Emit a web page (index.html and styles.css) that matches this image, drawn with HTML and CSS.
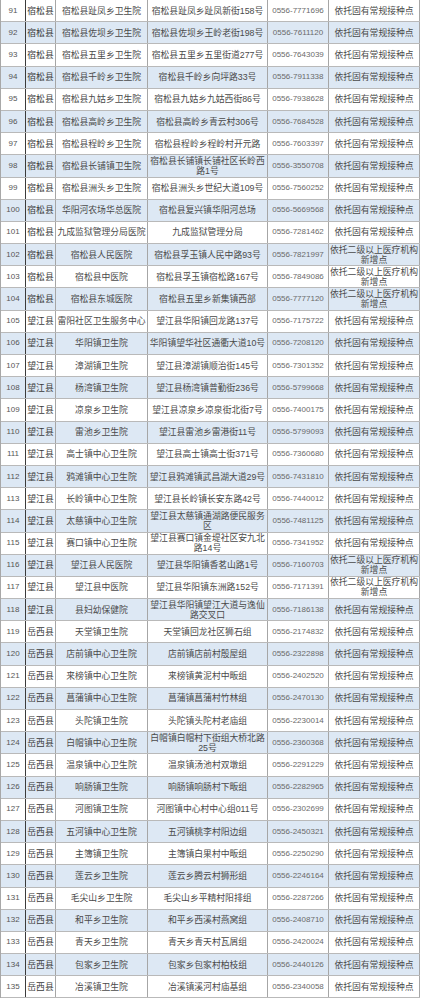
FILE: index.html
```html
<!DOCTYPE html>
<html lang="zh-CN">
<head>
<meta charset="utf-8">
<title>接种点</title>
<link rel="stylesheet" href="styles.css">
</head>
<body>
<div class="tbl">
<div class="row"><div class="c n">91</div><div class="c x">宿松县</div><div class="c">宿松县趾凤乡卫生院</div><div class="c">宿松县趾凤乡趾凤新街158号</div><div class="c p">0556-7771696</div><div class="c">依托固有常规接种点</div></div>
<div class="row"><div class="c n">92</div><div class="c x">宿松县</div><div class="c">宿松县佐坝乡卫生院</div><div class="c">宿松县佐坝乡王岭老街198号</div><div class="c p">0556-7611120</div><div class="c">依托固有常规接种点</div></div>
<div class="row"><div class="c n">93</div><div class="c x">宿松县</div><div class="c">宿松县五里乡卫生院</div><div class="c">宿松县五里乡五里街道277号</div><div class="c p">0556-7643039</div><div class="c">依托固有常规接种点</div></div>
<div class="row"><div class="c n">94</div><div class="c x">宿松县</div><div class="c">宿松县千岭乡卫生院</div><div class="c">宿松县千岭乡向坪路33号</div><div class="c p">0556-7911338</div><div class="c">依托固有常规接种点</div></div>
<div class="row"><div class="c n">95</div><div class="c x">宿松县</div><div class="c">宿松县九姑乡卫生院</div><div class="c">宿松县九姑乡九姑西街86号</div><div class="c p">0556-7938628</div><div class="c">依托固有常规接种点</div></div>
<div class="row"><div class="c n">96</div><div class="c x">宿松县</div><div class="c">宿松县高岭乡卫生院</div><div class="c">宿松县高岭乡青云村306号</div><div class="c p">0556-7684528</div><div class="c">依托固有常规接种点</div></div>
<div class="row"><div class="c n">97</div><div class="c x">宿松县</div><div class="c">宿松县程岭乡卫生院</div><div class="c">宿松县程岭乡程岭村开元路</div><div class="c p">0556-7603397</div><div class="c">依托固有常规接种点</div></div>
<div class="row"><div class="c n">98</div><div class="c x">宿松县</div><div class="c">宿松县长铺镇卫生院</div><div class="c">宿松县长铺镇长铺社区长岭西<br>路1号</div><div class="c p">0556-3550708</div><div class="c">依托固有常规接种点</div></div>
<div class="row"><div class="c n">99</div><div class="c x">宿松县</div><div class="c">宿松县洲头乡卫生院</div><div class="c">宿松县洲头乡世纪大道109号</div><div class="c p">0556-7560252</div><div class="c">依托固有常规接种点</div></div>
<div class="row"><div class="c n">100</div><div class="c x">宿松县</div><div class="c">华阳河农场华总医院</div><div class="c">宿松县复兴镇华阳河总场</div><div class="c p">0556-5669568</div><div class="c">依托固有常规接种点</div></div>
<div class="row"><div class="c n">101</div><div class="c x">宿松县</div><div class="c">九成监狱管理分局医院</div><div class="c">九成监狱管理分局</div><div class="c p">0556-7281462</div><div class="c">依托固有常规接种点</div></div>
<div class="row"><div class="c n">102</div><div class="c x">宿松县</div><div class="c">宿松县人民医院</div><div class="c">宿松县孚玉镇人民中路93号</div><div class="c p">0556-7821997</div><div class="c">依托二级以上医疗机构<br>新增点</div></div>
<div class="row"><div class="c n">103</div><div class="c x">宿松县</div><div class="c">宿松县中医院</div><div class="c">宿松县孚玉镇宿松路167号</div><div class="c p">0556-7849086</div><div class="c">依托二级以上医疗机构<br>新增点</div></div>
<div class="row"><div class="c n">104</div><div class="c x">宿松县</div><div class="c">宿松县东城医院</div><div class="c">宿松县五里乡新集镇西部</div><div class="c p">0556-7777120</div><div class="c">依托二级以上医疗机构<br>新增点</div></div>
<div class="row"><div class="c n">105</div><div class="c x">望江县</div><div class="c">雷阳社区卫生服务中心</div><div class="c">望江县华阳镇回龙路137号</div><div class="c p">0556-7175722</div><div class="c">依托固有常规接种点</div></div>
<div class="row"><div class="c n">106</div><div class="c x">望江县</div><div class="c">华阳镇卫生院</div><div class="c">华阳镇望华社区通衢大道10号</div><div class="c p">0556-7208120</div><div class="c">依托固有常规接种点</div></div>
<div class="row"><div class="c n">107</div><div class="c x">望江县</div><div class="c">漳湖镇卫生院</div><div class="c">望江县漳湖镇顺治街145号</div><div class="c p">0556-7301352</div><div class="c">依托固有常规接种点</div></div>
<div class="row"><div class="c n">108</div><div class="c x">望江县</div><div class="c">杨湾镇卫生院</div><div class="c">望江县杨湾镇普勤街236号</div><div class="c p">0556-5799668</div><div class="c">依托固有常规接种点</div></div>
<div class="row"><div class="c n">109</div><div class="c x">望江县</div><div class="c">凉泉乡卫生院</div><div class="c">望江县凉泉乡凉泉街北街7号</div><div class="c p">0556-7400175</div><div class="c">依托固有常规接种点</div></div>
<div class="row"><div class="c n">110</div><div class="c x">望江县</div><div class="c">雷池乡卫生院</div><div class="c">望江县雷池乡雷港街11号</div><div class="c p">0556-5799093</div><div class="c">依托固有常规接种点</div></div>
<div class="row"><div class="c n">111</div><div class="c x">望江县</div><div class="c">高士镇中心卫生院</div><div class="c">望江县高士镇高士街371号</div><div class="c p">0556-7360680</div><div class="c">依托固有常规接种点</div></div>
<div class="row"><div class="c n">112</div><div class="c x">望江县</div><div class="c">鸦滩镇中心卫生院</div><div class="c">望江县鸦滩镇武昌湖大道29号</div><div class="c p">0556-7431810</div><div class="c">依托固有常规接种点</div></div>
<div class="row"><div class="c n">113</div><div class="c x">望江县</div><div class="c">长岭镇中心卫生院</div><div class="c">望江县长岭镇长安东路42号</div><div class="c p">0556-7440012</div><div class="c">依托固有常规接种点</div></div>
<div class="row"><div class="c n">114</div><div class="c x">望江县</div><div class="c">太慈镇中心卫生院</div><div class="c">望江县太慈镇通湖路便民服务<br>区</div><div class="c p">0556-7481125</div><div class="c">依托固有常规接种点</div></div>
<div class="row"><div class="c n">115</div><div class="c x">望江县</div><div class="c">赛口镇中心卫生院</div><div class="c">望江县赛口镇金堤社区安九北<br>路14号</div><div class="c p">0556-7341952</div><div class="c">依托固有常规接种点</div></div>
<div class="row"><div class="c n">116</div><div class="c x">望江县</div><div class="c">望江县人民医院</div><div class="c">望江县华阳镇香茗山路1号</div><div class="c p">0556-7160703</div><div class="c">依托二级以上医疗机构<br>新增点</div></div>
<div class="row"><div class="c n">117</div><div class="c x">望江县</div><div class="c">望江县中医院</div><div class="c">望江县华阳镇东洲路152号</div><div class="c p">0556-7171391</div><div class="c">依托二级以上医疗机构<br>新增点</div></div>
<div class="row"><div class="c n">118</div><div class="c x">望江县</div><div class="c">县妇幼保健院</div><div class="c">望江县华阳镇望江大道与逸仙<br>路交叉口</div><div class="c p">0556-7186138</div><div class="c">依托固有常规接种点</div></div>
<div class="row"><div class="c n">119</div><div class="c x">岳西县</div><div class="c">天堂镇卫生院</div><div class="c">天堂镇回龙社区狮石组</div><div class="c p">0556-2174832</div><div class="c">依托固有常规接种点</div></div>
<div class="row"><div class="c n">120</div><div class="c x">岳西县</div><div class="c">店前镇中心卫生院</div><div class="c">店前镇店前村殷屋组</div><div class="c p">0556-2322898</div><div class="c">依托固有常规接种点</div></div>
<div class="row"><div class="c n">121</div><div class="c x">岳西县</div><div class="c">来榜镇中心卫生院</div><div class="c">来榜镇黄泥村中畈组</div><div class="c p">0556-2402520</div><div class="c">依托固有常规接种点</div></div>
<div class="row"><div class="c n">122</div><div class="c x">岳西县</div><div class="c">菖蒲镇中心卫生院</div><div class="c">菖蒲镇菖蒲村竹林组</div><div class="c p">0556-2470130</div><div class="c">依托固有常规接种点</div></div>
<div class="row"><div class="c n">123</div><div class="c x">岳西县</div><div class="c">头陀镇卫生院</div><div class="c">头陀镇头陀村老庙组</div><div class="c p">0556-2230014</div><div class="c">依托固有常规接种点</div></div>
<div class="row"><div class="c n">124</div><div class="c x">岳西县</div><div class="c">白帽镇中心卫生院</div><div class="c">白帽镇白帽村下街组大桥北路<br>25号</div><div class="c p">0556-2360368</div><div class="c">依托固有常规接种点</div></div>
<div class="row"><div class="c n">125</div><div class="c x">岳西县</div><div class="c">温泉镇中心卫生院</div><div class="c">温泉镇汤池村双墩组</div><div class="c p">0556-2291229</div><div class="c">依托固有常规接种点</div></div>
<div class="row"><div class="c n">126</div><div class="c x">岳西县</div><div class="c">响肠镇卫生院</div><div class="c">响肠镇响肠村下畈组</div><div class="c p">0556-2282965</div><div class="c">依托固有常规接种点</div></div>
<div class="row"><div class="c n">127</div><div class="c x">岳西县</div><div class="c">河图镇卫生院</div><div class="c">河图镇中心村中心组011号</div><div class="c p">0556-2302699</div><div class="c">依托固有常规接种点</div></div>
<div class="row"><div class="c n">128</div><div class="c x">岳西县</div><div class="c">五河镇中心卫生院</div><div class="c">五河镇桃李村阳边组</div><div class="c p">0556-2450321</div><div class="c">依托固有常规接种点</div></div>
<div class="row"><div class="c n">129</div><div class="c x">岳西县</div><div class="c">主簿镇卫生院</div><div class="c">主簿镇白果村中畈组</div><div class="c p">0556-2250290</div><div class="c">依托固有常规接种点</div></div>
<div class="row"><div class="c n">130</div><div class="c x">岳西县</div><div class="c">莲云乡卫生院</div><div class="c">莲云乡腾云村狮形组</div><div class="c p">0556-2246164</div><div class="c">依托固有常规接种点</div></div>
<div class="row"><div class="c n">131</div><div class="c x">岳西县</div><div class="c">毛尖山乡卫生院</div><div class="c">毛尖山乡平精村阳排组</div><div class="c p">0556-2287266</div><div class="c">依托固有常规接种点</div></div>
<div class="row"><div class="c n">132</div><div class="c x">岳西县</div><div class="c">和平乡卫生院</div><div class="c">和平乡西溪村燕窝组</div><div class="c p">0556-2408710</div><div class="c">依托固有常规接种点</div></div>
<div class="row"><div class="c n">133</div><div class="c x">岳西县</div><div class="c">青天乡卫生院</div><div class="c">青天乡青天村瓦屑组</div><div class="c p">0556-2420024</div><div class="c">依托固有常规接种点</div></div>
<div class="row"><div class="c n">134</div><div class="c x">岳西县</div><div class="c">包家乡卫生院</div><div class="c">包家乡包家村柏枝组</div><div class="c p">0556-2440126</div><div class="c">依托固有常规接种点</div></div>
<div class="row"><div class="c n">135</div><div class="c x">岳西县</div><div class="c">冶溪镇卫生院</div><div class="c">冶溪镇溪河村庙基组</div><div class="c p">0556-2340058</div><div class="c">依托固有常规接种点</div></div>
</div>
</body>
</html>
```

FILE: styles.css
```css
html, body {
  margin: 0;
  padding: 0;
  background: #ffffff;
}

.tbl {
  display: flex;
  flex-direction: column;
  width: 420px;
  border-left: 1px solid #a8a8a8;
  box-sizing: border-box;
  font-family: "Liberation Sans", "Noto Sans CJK SC", sans-serif;
  font-size: 8.8px;
  color: #4a4a4a;
}

.row {
  display: grid;
  grid-template-columns: 25px 30px 92px 120px 61px 91px;
  height: 22.2px;
  box-sizing: border-box;
  border-bottom: 1px solid #b9b9b9;
  background: #ffffff;
}

.row:nth-child(even) {
  background: #dde8f4;
}

.c {
  display: flex;
  align-items: center;
  justify-content: center;
  text-align: center;
  white-space: nowrap;
  line-height: 10px;
  border-right: 1px solid #a6a6a6;
  overflow: hidden;
}

.n {
  font-size: 8px;
  color: #555;
  border-right: 1px solid #3c3c3c;
}

.x {
  color: #3a3a3a;
}

.p {
  font-size: 8px;
  color: #6a6a6a;
}
```
